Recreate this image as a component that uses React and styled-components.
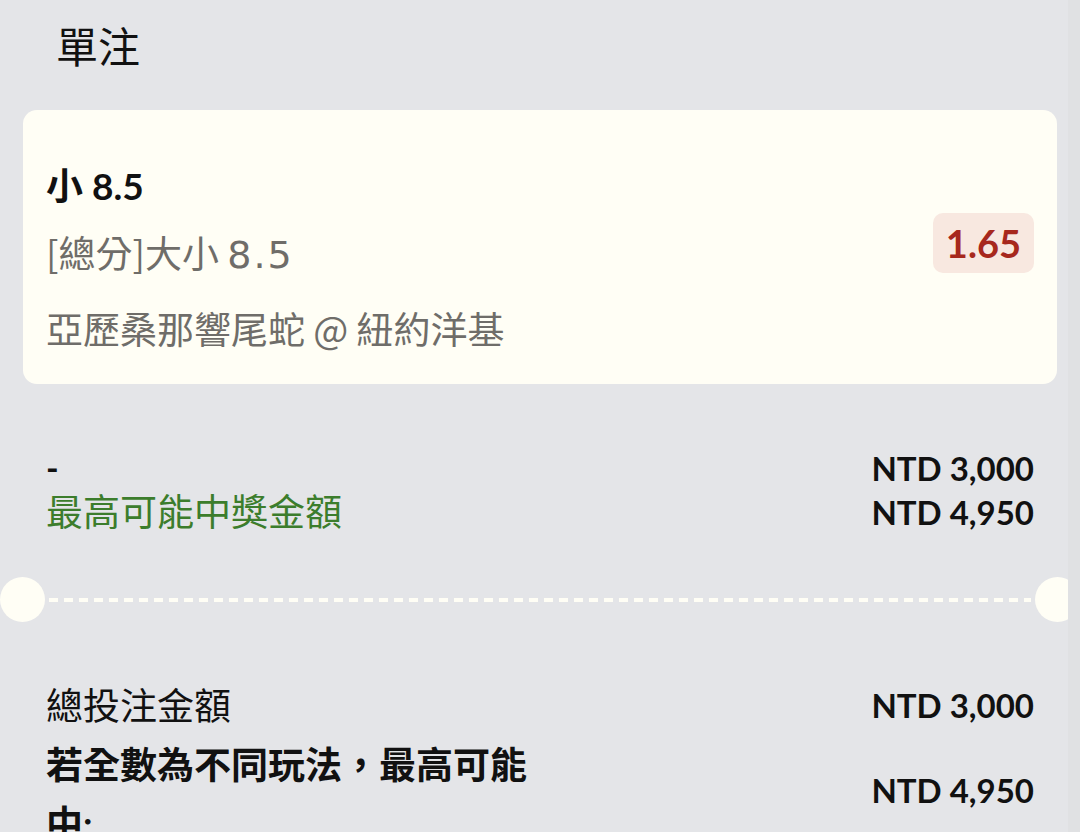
import React from "react";
import styled, { createGlobalStyle } from "styled-components";

const GlobalStyle = createGlobalStyle`
  html, body {
    margin: 0;
    padding: 0;
    background: #e4e5e8;
  }
  body {
    font-family: Lato, "Noto Sans CJK TC", "Noto Sans", sans-serif;
    color: #111;
    -webkit-font-smoothing: antialiased;
  }
  * { box-sizing: border-box; }
`;

const Page = styled.div`
  width: 1080px;
  min-height: 832px;
  overflow: hidden;
  position: relative;
`;

const Title = styled.h1`
  margin: 0;
  padding: 17px 56px 0;
  height: 77px;
  font-size: 42px;
  line-height: 60px;
  font-weight: 400;
  color: #111;
`;

const Card = styled.section`
  margin: 33px 23px 0;
  padding: 48px 23px 28px;
  background: #fffef5;
  border-radius: 14px;
  display: flex;
  align-items: center;
  justify-content: space-between;
`;

const CardInfo = styled.div`
  display: flex;
  flex-direction: column;
`;

const Selection = styled.div`
  font-size: 37px;
  line-height: 56px;
  font-weight: 700;
  color: #111;
`;

const InfoLine = styled.div`
  font-family: "Noto Sans CJK TC", "Noto Sans", sans-serif;
  font-size: 37px;
  height: 56px;
  line-height: 56px;
  color: #6f6d69;
  margin-top: ${(p) => p.$gap}px;
`;

const Num = styled.span`
  font-family: "DejaVu Sans", sans-serif;
  font-size: 38px;
  line-height: 1;
  letter-spacing: 2px;
`;

const OddsBadge = styled.div`
  height: 60px;
  padding: 0 13px;
  border-radius: 10px;
  background: #f8e8e0;
  color: #a7281d;
  font-size: 38px;
  font-weight: 700;
  line-height: 60px;
  margin-top: -29px;
`;

const Summary = styled.div`
  margin: ${(p) => p.$top}px 46px 0;
  display: flex;
  flex-direction: column;
`;

const Row = styled.div`
  display: grid;
  grid-template-columns: 1fr 1fr;
  align-items: center;
  line-height: ${(p) => p.$lh}px;
`;

const Label = styled.div`
  font-size: 37px;
  font-weight: ${(p) => (p.$bold ? 700 : 400)};
  color: ${(p) => p.$color || "#111"};
`;

const Dash = styled.div`
  font-size: 34px;
  font-weight: 700;
  color: #111;
`;

const Value = styled.div`
  font-size: 33px;
  font-weight: 700;
  text-align: right;
  color: #111;
  margin-top: ${(p) => p.$shift || 0}px;
`;

const Divider = styled.div`
  margin-top: 43px;
  height: 45px;
  display: flex;
  align-items: center;
`;

const Notch = styled.div`
  width: 45px;
  height: 45px;
  border-radius: 50%;
  background: #fffef5;
  flex: none;
`;

const DashLine = styled.div`
  flex: 1;
  height: 4px;
  margin: 0 4px;
  background: repeating-linear-gradient(
    to right,
    #fffef5 0 9px,
    transparent 9px 15px
  );
`;

const ScrollTrack = styled.div`
  position: fixed;
  top: 0;
  right: 0;
  width: 12px;
  height: 100%;
  background: #e0e1e3;
`;

export default function App() {
  return (
    <>
      <GlobalStyle />
      <Page>
        <Title>單注</Title>
        <Card>
          <CardInfo>
            <Selection>小 8.5</Selection>
            <InfoLine $gap={10}>
              [總分]大小 <Num>8.5</Num>
            </InfoLine>
            <InfoLine $gap={20}>亞歷桑那響尾蛇 @ 紐約洋基</InfoLine>
          </CardInfo>
          <OddsBadge>1.65</OddsBadge>
        </Card>

        <Summary $top={62}>
          <Row $lh={44}>
            <Dash>-</Dash>
            <Value>NTD 3,000</Value>
          </Row>
          <Row $lh={44}>
            <Label $color="#3c7d2c">最高可能中獎金額</Label>
            <Value>NTD 4,950</Value>
          </Row>
        </Summary>

        <Divider>
          <Notch />
          <DashLine />
          <Notch />
        </Divider>

        <Summary $top={54}>
          <Row $lh={59}>
            <Label>總投注金額</Label>
            <Value>NTD 3,000</Value>
          </Row>
          <Row $lh={59}>
            <Label $bold>若全數為不同玩法，最高可能中:</Label>
            <Value $shift={-8}>NTD 4,950</Value>
          </Row>
        </Summary>
        <ScrollTrack />
      </Page>
    </>
  );
}
